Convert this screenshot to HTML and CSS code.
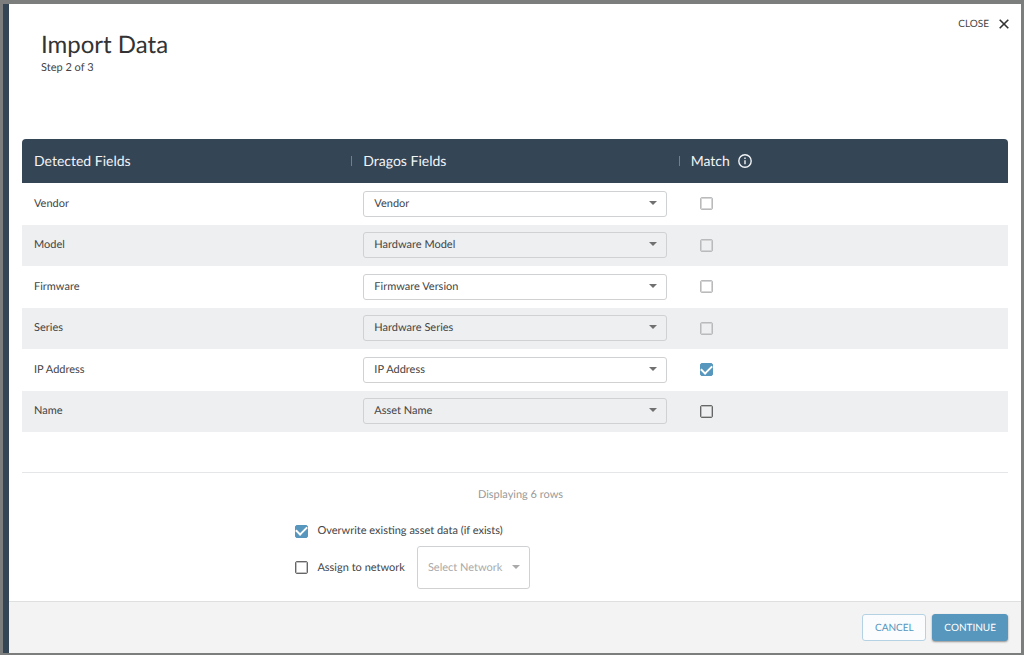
FILE: index.html
```html
<!DOCTYPE html>
<html lang="en">
<head>
<meta charset="utf-8">
<meta name="viewport" content="width=device-width, initial-scale=1">
<title>Import Data</title>
<link rel="stylesheet" href="styles.css">
</head>
<body>
<div class="backdrop">
  <main class="dialog" role="dialog" aria-labelledby="title">
    <header class="dialog-header">
      <div class="heading">
        <h1 class="title" id="title">Import Data</h1>
        <p class="step">Step 2 of 3</p>
      </div>
      <button class="close" type="button">CLOSE
        <svg class="close-icon" viewBox="0 0 10 10" aria-hidden="true"><path d="M0.7 0.7l8.6 8.6M9.3 0.7l-8.6 8.6"/></svg>
      </button>
    </header>

    <section class="content">
      <table class="fields">
        <thead>
          <tr>
            <th class="col-detected" scope="col">Detected Fields</th>
            <th class="col-dragos" scope="col"><span class="divided">Dragos Fields</span></th>
            <th scope="col"><span class="divided">Match
              <svg class="info-icon" viewBox="0 0 14 14" aria-hidden="true"><circle cx="7" cy="7" r="6.2"/><path d="M7 6.3v4M7 3.6v1.4"/></svg></span>
            </th>
          </tr>
        </thead>
        <tbody>
          <tr>
            <td><label for="f1">Vendor</label></td>
            <td><div class="select"><select id="f1"><option>Vendor</option></select></div></td>
            <td><input class="check match" type="checkbox" aria-label="Match Vendor" disabled></td>
          </tr>
          <tr>
            <td><label for="f2">Model</label></td>
            <td><div class="select"><select id="f2"><option>Hardware Model</option></select></div></td>
            <td><input class="check match" type="checkbox" aria-label="Match Model" disabled></td>
          </tr>
          <tr>
            <td><label for="f3">Firmware</label></td>
            <td><div class="select"><select id="f3"><option>Firmware Version</option></select></div></td>
            <td><input class="check match" type="checkbox" aria-label="Match Firmware" disabled></td>
          </tr>
          <tr>
            <td><label for="f4">Series</label></td>
            <td><div class="select"><select id="f4"><option>Hardware Series</option></select></div></td>
            <td><input class="check match" type="checkbox" aria-label="Match Series" disabled></td>
          </tr>
          <tr>
            <td><label for="f5">IP Address</label></td>
            <td><div class="select"><select id="f5"><option>IP Address</option></select></div></td>
            <td><input class="check match" type="checkbox" aria-label="Match IP Address" checked></td>
          </tr>
          <tr>
            <td><label for="f6">Name</label></td>
            <td><div class="select"><select id="f6"><option>Asset Name</option></select></div></td>
            <td><input class="check match" type="checkbox" aria-label="Match Name"></td>
          </tr>
        </tbody>
      </table>
      <p class="count">Displaying 6 rows</p>
    </section>

    <section class="options">
      <div class="option">
        <input class="check" type="checkbox" id="overwrite" checked>
        <label for="overwrite">Overwrite existing asset data (if exists)</label>
      </div>
      <div class="option">
        <input class="check" type="checkbox" id="assign">
        <label for="assign">Assign to network</label>
        <div class="select select-network"><select aria-label="Network" disabled><option>Select Network</option></select></div>
      </div>
    </section>

    <footer class="dialog-footer">
      <button class="button button-outline" type="button">CANCEL</button>
      <button class="button button-solid" type="button">CONTINUE</button>
    </footer>
  </main>
</div>
</body>
</html>
```
FILE: styles.css
```css
* {
  box-sizing: border-box;
}

body {
  margin: 0;
  font-family: Lato, sans-serif;
  font-size: 11px;
  line-height: 16px;
  text-rendering: geometricPrecision;
  color: #444;
}

h1,
p {
  margin: 0;
  font-weight: 400;
}

button,
select {
  font: inherit;
  text-rendering: inherit;
}

.backdrop {
  display: flex;
  min-height: 100vh;
  padding: 4px 3px 2px;
  background: #7c7e7d;
}

.dialog {
  display: flex;
  flex: 1;
  flex-direction: column;
  background: #fff;
  border-left: 6px solid #344556;
}

.dialog-header {
  display: flex;
  justify-content: space-between;
  align-items: flex-start;
  padding: 12px 12px 0 32px;
}

.title {
  font-size: 24px;
  line-height: 58px;
  color: #333;
}

.step {
  margin-top: -14px;
}

.close {
  display: flex;
  align-items: center;
  gap: 10px;
  padding: 0;
  border: 0;
  background: none;
  font-size: 10px;
  color: #444;
}

.close-icon {
  width: 10px;
  height: 10px;
  fill: none;
  stroke: #333;
  stroke-width: 1.6;
}

.content {
  padding: 63px 13px 0;
}

.fields {
  width: 100%;
  table-layout: fixed;
  border-collapse: separate;
  border-spacing: 0;
}

.fields th {
  height: 44px;
  padding: 0 0 0 12px;
  background: #344556;
  color: #f2f4f6;
  font-size: 14px;
  font-weight: 400;
  text-align: left;
}

.fields th:first-child {
  border-top-left-radius: 4px;
}

.fields th:last-child {
  border-top-right-radius: 4px;
}

.col-detected {
  width: 33.4%;
}

.col-dragos {
  width: 33.2%;
}

.divided {
  display: flex;
  align-items: center;
  gap: 8px;
  margin-left: -12px;
}

.divided::before {
  content: "";
  width: 1px;
  height: 10px;
  margin-right: 3px;
  background: #71808d;
}

.info-icon {
  width: 14px;
  height: 14px;
  fill: none;
  stroke: #f2f4f6;
  stroke-width: 1.4;
}

.fields td {
  height: 41px;
  padding: 0 12px 1px;
  vertical-align: middle;
}

.fields tbody tr:nth-child(odd) td {
  height: 42px;
}

.fields tbody tr:nth-child(even) {
  background: #eeeff1;
}

.select {
  position: relative;
}

.select::after {
  content: "";
  position: absolute;
  top: 50%;
  right: 10px;
  margin-top: -3px;
  border: 4px solid transparent;
  border-top-color: #707070;
  border-bottom: 0;
  pointer-events: none;
}

.select select {
  display: block;
  width: 100%;
  height: 26px;
  padding: 0 24px 0 10px;
  appearance: none;
  background: transparent;
  border: 1px solid #d0d1d3;
  border-radius: 3px;
  color: #444;
  opacity: 1;
}

.select-network {
  margin-left: 3px;
}

.select-network select {
  height: 43px;
  padding-right: 26px;
  color: #aaa;
}

.select-network::after {
  border-top-color: #aaa;
}

.check {
  display: grid;
  place-content: center;
  width: 13px;
  height: 13px;
  margin: 0;
  appearance: none;
  border: 1px solid #666;
  border-radius: 2px;
  box-shadow: inset 0 0 0 1px #9999;
}

.fields .check {
  display: inline-grid;
  vertical-align: middle;
}

.check:disabled {
  border-color: #b9babb;
  box-shadow: inset 0 0 0 1px #cccc;
}

.check:checked {
  background: #5796bd;
  border-color: #5796bd;
  box-shadow: none;
}

.check:checked::before {
  content: "";
  width: 9px;
  height: 5px;
  margin-top: -3px;
  border: solid #fff;
  border-width: 0 0 2px 2px;
  transform: rotate(-45deg);
}

.fields .match {
  margin-left: 9px;
}

.count {
  margin-top: 40px;
  padding: 14px 0 0 11px;
  border-top: 1px solid #e5e6e7;
  color: #999;
  text-align: center;
}

.options {
  display: grid;
  gap: 7px;
  padding: 20px 12px 12px 28.3%;
}

.option {
  display: flex;
  align-items: center;
  gap: 9px;
}

.dialog-footer {
  display: flex;
  justify-content: flex-end;
  gap: 6px;
  margin-top: auto;
  padding: 12px 13px;
  background: #f3f3f3;
  border-top: 1px solid #dedfdf;
}

.button {
  min-width: 64px;
  height: 27px;
  padding: 0 11px;
  border: 1px solid #5796bd;
  border-radius: 3px;
  font-size: 10px;
}

.button-outline {
  background: #fbfcfd;
  border-color: #b4d2e3;
  color: #5796bd;
}

.button-solid {
  background: #5796bd;
  color: #fff;
  box-shadow: 0 1px 2px #0006;
}
```
